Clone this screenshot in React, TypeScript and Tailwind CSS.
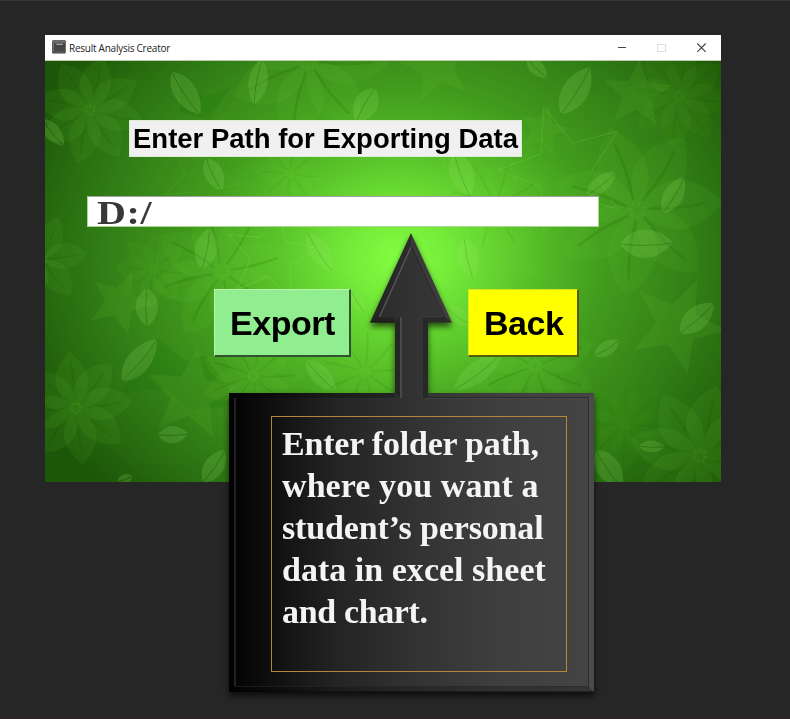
import React from "react";

type Tuple4 = [number, number, number, number];

/** A pointed leaf running from one tip to the other. */
function Leaf({ tips, wide = 0.3, tone = "#9be56a", alpha = 0.18 }: { tips: Tuple4; wide?: number; tone?: string; alpha?: number }) {
  const [x1, y1, x2, y2] = tips;
  const dx = x2 - x1;
  const dy = y2 - y1;
  const at = (t: number, n: number) => `${x1 + dx * t - dy * n} ${y1 + dy * t + dx * n}`;
  return (
    <g opacity={alpha}>
      <path
        d={`M${x1} ${y1}C${at(0.2, wide)} ${at(0.65, wide * 1.25)} ${x2} ${y2}C${at(0.75, -wide)} ${at(0.25, -wide * 1.2)} ${x1} ${y1}Z`}
        fill={tone}
      />
      <path d={`M${x1} ${y1}Q${at(0.5, 0.07)} ${x2} ${y2}`} fill="none" stroke="#1c6209" strokeWidth="1" />
    </g>
  );
}

/** Broad petals with a dark vein, set round a speckled centre. */
function Flower({ x, y, r, turn = 0, n = 8, alpha = 0.09 }: { x: number; y: number; r: number; turn?: number; n?: number; alpha?: number }) {
  return (
    <g transform={`translate(${x} ${y}) rotate(${turn})`}>
      {Array.from({ length: n }, (_, i) => (
        <g key={i} transform={`rotate(${(i * 360) / n}) scale(${r / 100})`}>
          <path d="M0 0C-40 -28 -38 -68 2 -100C34 -68 40 -30 0 0Z" fill="#6fd038" opacity={alpha} />
          <path d="M0 -12Q5 -45 1 -80" fill="none" stroke="#0e4a04" strokeWidth="3.2" opacity={alpha * 1.5} />
        </g>
      ))}
      {Array.from({ length: 7 }, (_, i) => (
        <circle key={i} cx={Math.cos(i * 0.9) * r * 0.08} cy={Math.sin(i * 0.9) * r * 0.08} r="1.4" fill="#8ee44e" opacity={alpha} />
      ))}
    </g>
  );
}

function Star({ x, y, r, turn = 0, line = false, alpha = 0.11 }: { x: number; y: number; r: number; turn?: number; line?: boolean; alpha?: number }) {
  const points = Array.from({ length: 10 }, (_, i) => {
    const a = ((i * 36 + turn) * Math.PI) / 180;
    const d = i % 2 ? r * 0.43 : r;
    return `${x + Math.sin(a) * d},${y - Math.cos(a) * d}`;
  }).join(" ");
  return <polygon points={points} fill={line ? "none" : "#72d438"} stroke={line ? "#93ed58" : "none"} strokeWidth="1" opacity={alpha} />;
}

const leaves: { tips: Tuple4; wide?: number; alpha?: number }[] = [
  { tips: [172, 72, 200, 115], wide: 0.26 },
  { tips: [42, 119, 64, 146], wide: 0.26 },
  { tips: [206, 158, 222, 191], wide: 0.3 },
  { tips: [262, 60, 254, 105], wide: 0.25 },
  { tips: [375, 88, 356, 123], wide: 0.35 },
  { tips: [454, 152, 470, 196], wide: 0.3 },
  { tips: [561, 114, 590, 67], wide: 0.28 },
  { tips: [527, 58, 547, 78], wide: 0.3 },
  { tips: [586, 196, 616, 172], wide: 0.25 },
  { tips: [663, 213, 684, 177], wide: 0.28 },
  { tips: [620, 244, 673, 243], wide: 0.32 },
  { tips: [147, 288, 147, 327], wide: 0.34 },
  { tips: [122, 381, 157, 339], wide: 0.25 },
  { tips: [202, 269, 210, 228], wide: 0.32 },
  { tips: [158, 435, 188, 434], wide: 0.34 },
  { tips: [203, 482, 225, 450], wide: 0.3 },
  { tips: [117, 482, 133, 476], wide: 0.35 },
  { tips: [308, 233, 332, 271], wide: 0.28 },
  { tips: [306, 360, 336, 391], wide: 0.25 },
  { tips: [352, 292, 365, 313], wide: 0.3, alpha: 0.16 },
  { tips: [464, 238, 473, 279], wide: 0.3 },
  { tips: [444, 306, 471, 325], wide: 0.3, alpha: 0.16 },
  { tips: [594, 356, 620, 340], wide: 0.28 },
  { tips: [680, 333, 714, 303], wide: 0.3 },
  { tips: [454, 390, 503, 352], wide: 0.2 },
  { tips: [639, 446, 665, 447], wide: 0.26 },
  { tips: [596, 450, 622, 488], wide: 0.3 },
];

function Foliage() {
  return (
    <svg className="absolute inset-0 h-full w-full" viewBox="45 61 676 421" preserveAspectRatio="none" aria-hidden="true">
      <defs>
        <radialGradient id="glow" gradientUnits="userSpaceOnUse" cx="0" cy="0" r="1" gradientTransform="translate(400 258) scale(405 335)">
          <stop offset="0" stopColor="#82ff42" />
          <stop offset="0.12" stopColor="#76ec3a" />
          <stop offset="0.3" stopColor="#5ac52a" />
          <stop offset="0.5" stopColor="#429c1d" />
          <stop offset="0.75" stopColor="#307b15" />
          <stop offset="1" stopColor="#1c5608" />
        </radialGradient>
        <filter id="soft" x="0" y="0" width="100%" height="100%">
          <feGaussianBlur stdDeviation="0.6" />
        </filter>
      </defs>
      <rect x="45" y="61" width="676" height="421" fill="url(#glow)" />
      <g filter="url(#soft)">
        <path d="M180 75L204 97 230 88 208 120 180 112ZM158 338L185 361 205 355 240 405 190 410 168 390 122 391Z" fill="#1a6509" opacity="0.14" />
        <Flower x={90} y={110} r={55} turn={12} />
        <Flower x={76} y={408} r={57} turn={-8} />
        <Flower x={42} y={260} r={46} turn={20} n={6} />
        <Flower x={222} y={272} r={72} turn={-15} />
        <Flower x={308} y={62} r={82} turn={38} n={7} />
        <Flower x={253} y={376} r={52} turn={8} n={9} />
        <Flower x={365} y={372} r={50} turn={3} n={9} alpha={0.07} />
        <Flower x={637} y={210} r={87} turn={32} n={7} />
        <Flower x={535} y={366} r={63} turn={22} />
        <Flower x={700} y={456} r={72} turn={12} />
        <Flower x={679} y={96} r={52} turn={7} alpha={0.06} />
        <Flower x={625} y={425} r={48} alpha={0.04} />
        <Flower x={495} y={205} r={55} turn={16} alpha={0.05} />
        <Flower x={290} y={174} r={36} turn={4} alpha={0.05} />
        <Flower x={153} y={270} r={38} turn={4} alpha={0.05} />
        <Star x={437} y={66} r={38} turn={-12} />
        <Star x={637} y={94} r={36} turn={4} />
        <Star x={543} y={130} r={27} turn={15} />
        <Star x={120} y={302} r={34} turn={22} />
        <Star x={191} y={395} r={48} turn={8} />
        <Star x={505} y={257} r={40} turn={-28} />
        <Star x={677} y={325} r={50} turn={24} />
        <Star x={430} y={180} r={46} turn={12} line />
        <Star x={564} y={170} r={66} turn={-18} line alpha={0.18} />
        <Star x={271} y={256} r={48} turn={9} line alpha={0.25} />
        <Star x={202} y={177} r={40} turn={28} line />
        {leaves.map((leaf, i) => (
          <Leaf key={i} {...leaf} />
        ))}
      </g>
    </svg>
  );
}

function TitleBar() {
  return (
    <header className="flex h-[26px] items-center border-b border-[#bdcbb4] bg-white pl-[7px] font-['Open_Sans','Noto_Sans',sans-serif] text-[#222]">
      <svg width="14" height="14" viewBox="0 0 14 14" aria-hidden="true" className="-mt-px">
        <defs>
          <linearGradient id="book" x2="0" y2="1">
            <stop stopColor="#777" />
            <stop offset="0.35" stopColor="#414141" />
            <stop offset="1" stopColor="#4b4b4b" />
          </linearGradient>
        </defs>
        <rect x="0.2" y="0.3" width="13.5" height="13.2" rx="1" fill="#333" />
        <rect x="2" y="1" width="11" height="10.6" fill="url(#book)" />
        <path d="M1.5 1V12M2 12.2H13" stroke="#999" strokeWidth="0.6" />
        <path d="M4.3 4.4H10.8" stroke="#a5a5a5" strokeWidth="1.3" />
      </svg>
      <span className="ml-[3px] text-[10px] leading-none tracking-[-0.25px]">Result Analysis Creator</span>
      <svg className="ml-auto" width="105" height="24" viewBox="616 36 105 24" fill="none" aria-hidden="true">
        <path d="M618 47.5H626" stroke="#444" />
        <path d="M657.5 44.5H665.5V51.5H657.5Z" stroke="#dedede" />
        <path d="M697.3 43.5L705.7 51.9M705.7 43.5L697.3 51.9" stroke="#444" strokeWidth="1.1" />
      </svg>
    </header>
  );
}

function Callout() {
  return (
    <aside className="absolute top-[232px] left-[229px] h-[459px] w-[365px]">
      <svg className="absolute inset-0 overflow-visible" width="365" height="459" viewBox="229 233 365 459" aria-hidden="true">
        <defs>
          <linearGradient id="slate" gradientUnits="userSpaceOnUse" x1="229" x2="594" y1="0" y2="0">
            <stop stopColor="#020202" />
            <stop offset="0.15" stopColor="#131313" />
            <stop offset="0.3" stopColor="#242424" />
            <stop offset="0.5" stopColor="#323232" />
            <stop offset="0.75" stopColor="#3f3f3f" />
            <stop offset="1" stopColor="#444" />
          </linearGradient>
          <filter id="shade" x="-10%" y="-10%" width="120%" height="120%" colorInterpolationFilters="sRGB">
            <feDropShadow dx="0" dy="4" stdDeviation="3" floodColor="#000" floodOpacity="0.65" />
          </filter>
        </defs>
        <path
          d="M411 233L452 322.5H428V393H594V692H229V393H395V322.5H370Z"
          fill="url(#slate)"
          filter="url(#shade)"
        />
        <g fill="none">
          <path d="M411 233L452 322.5L444.5 317.5L411 244ZM594 393V692L589 687V398Z" fill="#fff" fillOpacity="0.035" />
          <path d="M370 322.5L411 233V244L379 317.5Z" fill="#000" fillOpacity="0.12" />
          <path d="M370 322.5H395V317.5H378ZM428 322.5H452L445 317.5H423V398H428ZM229 393H395V398H234ZM229 692H594L589 687H234Z" fill="#000" fillOpacity="0.22" />
          <path d="M395 322V393L400 398V317Z" fill="#000" fillOpacity="0.2" />
          <path d="M379.5 317L411 247M401 317V398" stroke="#565656" strokeWidth="1.4" />
          <path d="M235 398V686" stroke="#2c2c2c" strokeWidth="1.5" />
          <path d="M411 247L445 317.5H423.5V397.5H588.5V686.5H235" stroke="#242424" strokeOpacity="0.7" />
          <path d="M424.5 398.5H587.5M422 317H444" stroke="#505050" strokeOpacity="0.4" />
          <path d="M590 687.5V398" stroke="#555" strokeOpacity="0.5" />
          <path d="M229.5 393V692M229 691.5H594M370 322H395" stroke="#000" strokeOpacity="0.35" />
        </g>
      </svg>
      <div className="relative mt-[183px] ml-[42px] flex h-[256px] w-[296px] flex-col border border-[#b88439] pt-[6px] pl-[10px] font-['Liberation_Serif',serif] text-[34px] leading-[42px] font-bold whitespace-nowrap text-[#f4f4f4]">
        <span className="tracking-[-0.2px]">Enter folder path,</span>
        <span className="tracking-[0.08px]">where you want a</span>
        <span className="tracking-[-0.15px]">student’s personal</span>
        <span className="tracking-[0.02px]">data in excel sheet</span>
        <span className="tracking-[-0.35px]">and chart.</span>
      </div>
    </aside>
  );
}

export default function App() {
  return (
    <main className="relative h-[719px] w-[790px] overflow-hidden border-t border-t-[#363636] border-b border-b-[#2c2325] bg-[#262626] pt-[34px] pl-[45px] font-['Liberation_Sans',sans-serif]">
      <section className="w-[676px]">
        <TitleBar />
        <div className="relative h-[421px] overflow-hidden">
          <Foliage />
          <div className="relative flex flex-col items-start pt-[59px]">
            <h1 className="ml-[84px] h-[37px] w-[393px] border border-[#dcebd3] bg-[#f0f0f0] pl-[3px] text-[27.5px] leading-[35px] font-bold whitespace-nowrap text-black">
              Enter Path for Exporting Data
            </h1>
            <div className="mt-[39px] ml-[42px] h-[31px] w-[512px] border border-[#a8d890] border-t-[#a0a0a0] bg-white pl-[9px] font-['Liberation_Serif',serif] text-[34.5px] leading-[30px] font-bold text-[#383838]">
              <span className="inline-block origin-left scale-x-[1.16] tracking-[0.6px]">D:/</span>
            </div>
            <div className="mt-[62px] ml-[169px] flex gap-[117px] text-[34px] leading-[64px] font-bold tracking-[-0.45px] text-black">
              <button className="flex h-[68px] w-[137px] items-start border border-r-2 border-b-2 border-[#b9f7ae] border-r-[#30532f] border-b-[#30532f] bg-[#90ee90] pt-px pl-[15px]">
                Export
              </button>
              <button className="flex h-[68px] w-[111px] items-start border border-r-2 border-b-2 border-[#d6e617] border-r-[#555d0d] border-b-[#555d0d] bg-[#ffff00] pt-px pl-[15px]">
                Back
              </button>
            </div>
          </div>
        </div>
      </section>
      <Callout />
    </main>
  );
}
